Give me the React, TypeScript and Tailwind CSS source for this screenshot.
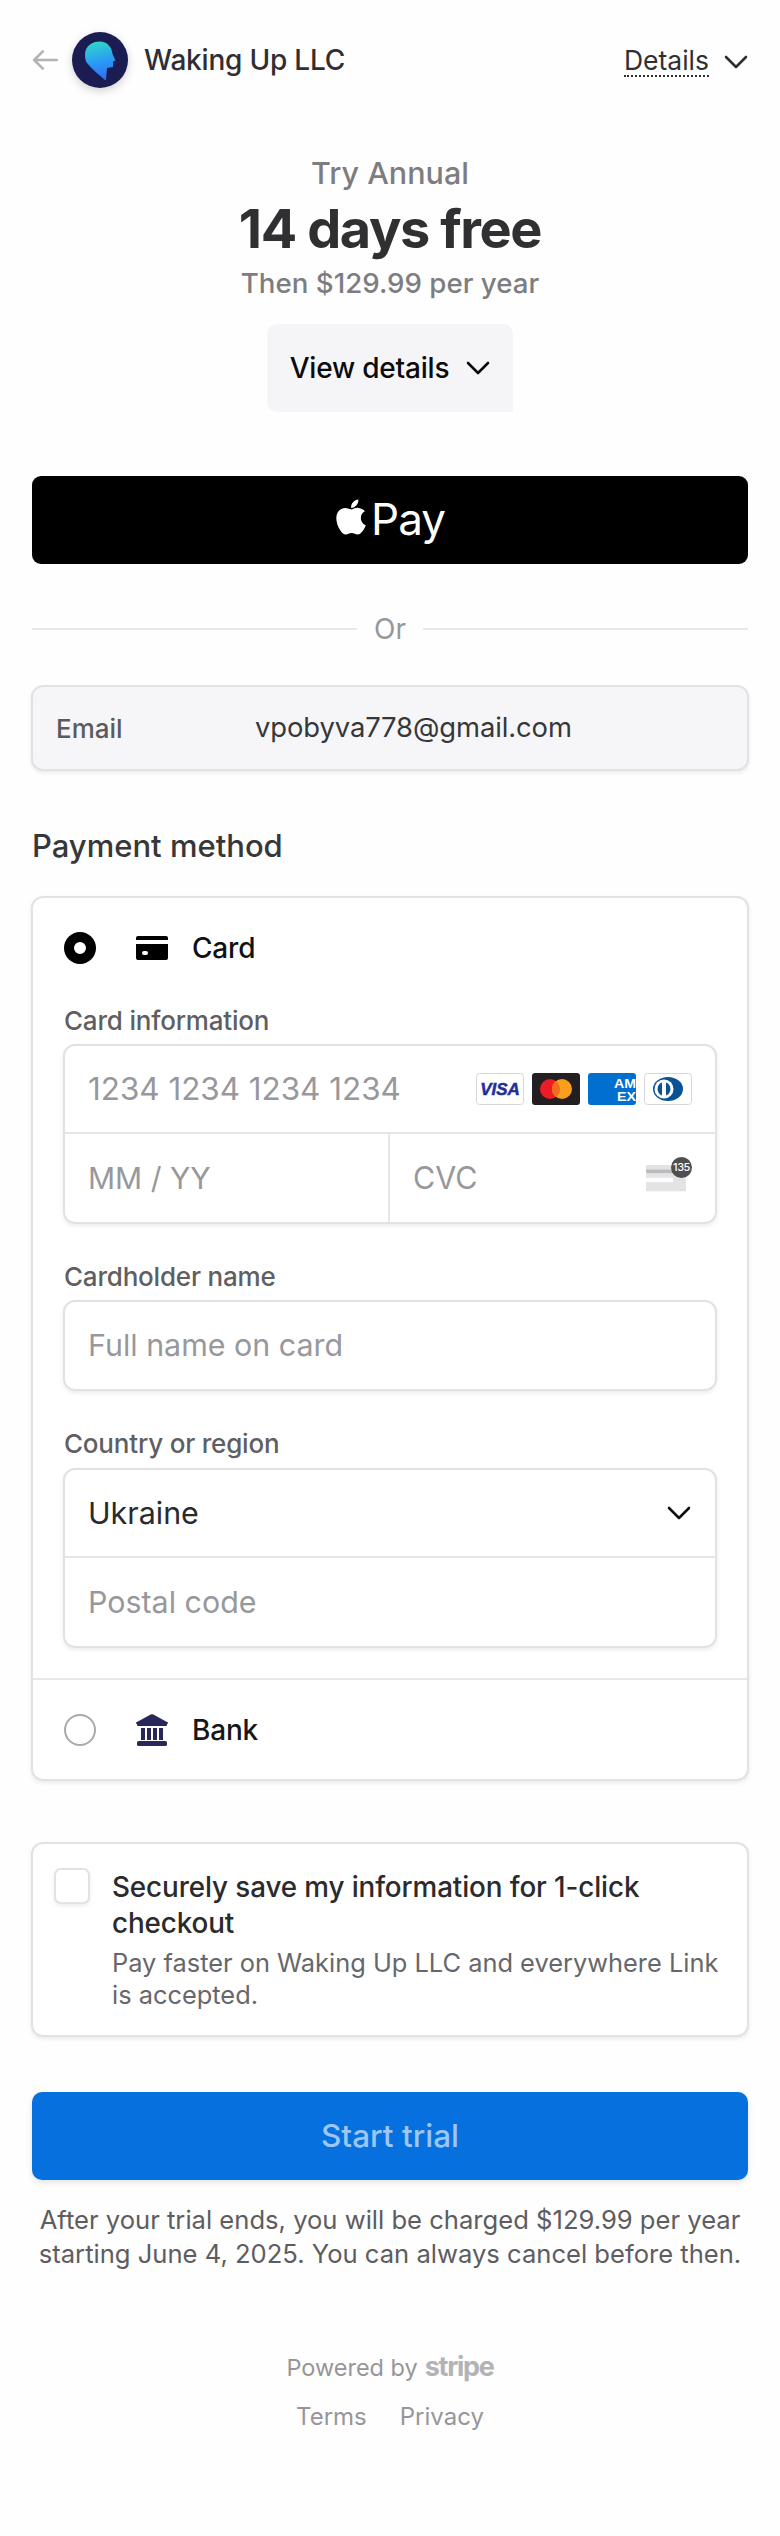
import React from "react";
import { FaApple } from "react-icons/fa6";

const inputShadow = "shadow-[0_2px_4px_rgba(0,0,0,0.08)]";

function Chevron({ className }: { className: string }) {
  return (
    <svg viewBox="0 0 24 16" className={className} fill="none" stroke="currentColor" strokeWidth="2.6" strokeLinecap="round" strokeLinejoin="round">
      <path d="M2 3 L12 13 L22 3" />
    </svg>
  );
}

function Logo() {
  return (
    <svg viewBox="0 0 56 56" className="w-[56px] h-[56px] shrink-0 drop-shadow-[0_3px_4px_rgba(0,0,0,0.18)]">
      <defs>
        <linearGradient id="head" x1="0.4" y1="0" x2="0.6" y2="1">
          <stop offset="0" stopColor="#2fd6c8" />
          <stop offset="0.5" stopColor="#2a9df4" />
          <stop offset="1" stopColor="#2f6cf5" />
        </linearGradient>
      </defs>
      <circle cx="28" cy="28" r="28" fill="#1b1c52" />
      <path d="M13 23 C13 14 20 9.5 28 9.5 C35 9.5 40 15 40.5 22 L43.5 28.5 L41 29.5 L41 35 L35 36 L34 48 L33 48 C27 43 20 37 15 31 C13.5 29 13 26 13 23 Z" fill="url(#head)" />
    </svg>
  );
}

function Visa() {
  return (
    <svg viewBox="0 0 48 32" className="w-[48px] h-[32px]">
      <rect x="0.5" y="0.5" width="47" height="31" rx="3" fill="#fff" stroke="#d5d5da" />
      <text x="24" y="22" textAnchor="middle" fontFamily="'Liberation Sans', sans-serif" fontWeight="700" fontStyle="italic" fontSize="17" fill="#1f2f98" stroke="#1f2f98" strokeWidth="0.5">VISA</text>
    </svg>
  );
}

function Mastercard() {
  return (
    <svg viewBox="0 0 48 32" className="w-[48px] h-[32px]">
      <rect width="48" height="32" rx="3" fill="#231f20" />
      <circle cx="18" cy="16" r="10" fill="#eb1c26" />
      <circle cx="30" cy="16" r="10" fill="#f99f1b" />
      <path d="M24 8 A10 10 0 0 1 24 24 A10 10 0 0 1 24 8 Z" fill="#f26d1f" />
    </svg>
  );
}

function Amex() {
  return (
    <svg viewBox="0 0 48 32" className="w-[48px] h-[32px]">
      <defs>
        <clipPath id="amexclip"><rect width="48" height="32" rx="3" /></clipPath>
      </defs>
      <g clipPath="url(#amexclip)">
        <rect width="48" height="32" fill="#016fd0" />
        <text x="26" y="15" fontFamily="'Liberation Sans', sans-serif" fontWeight="700" fontSize="12" textLength="22" lengthAdjust="spacingAndGlyphs" fill="#fff">AM</text>
        <text x="29" y="28" fontFamily="'Liberation Sans', sans-serif" fontWeight="700" fontSize="12" textLength="19" lengthAdjust="spacingAndGlyphs" fill="#fff">EX</text>
      </g>
    </svg>
  );
}

function Diners() {
  return (
    <svg viewBox="0 0 48 32" className="w-[48px] h-[32px]">
      <rect x="0.5" y="0.5" width="47" height="31" rx="3" fill="#fff" stroke="#d5d5da" />
      <ellipse cx="24" cy="16" rx="15" ry="12" fill="#0a5296" />
      <circle cx="20" cy="16" r="9.5" fill="#fff" />
      <path d="M18 9.5 A7 7 0 0 0 18 22.5 Z M22 9.5 A7 7 0 0 1 22 22.5 Z" fill="#0a5296" />
    </svg>
  );
}

function Cvc() {
  return (
    <div className="relative w-[44px] h-[32px]">
      <svg viewBox="0 0 44 32" className="absolute left-0 top-[3px] w-[44px] h-[29px]">
        <rect width="44" height="29" fill="#e3e3e6" />
        <rect y="5" width="44" height="4" fill="#bcbcbf" />
        <rect y="14" width="30" height="5" fill="#fbfbfc" />
      </svg>
      <div className="absolute right-[-4px] top-[-5px] w-[21px] h-[21px] rounded-full bg-[#4f4f52] text-white text-[11px] font-medium leading-[21px] text-center tracking-[-0.5px]">135</div>
    </div>
  );
}

function Label({ children }: { children: React.ReactNode }) {
  return <div className="h-[28px] leading-[28px] text-[#5f5f63] text-[26px] font-medium tracking-[-0.2px]">{children}</div>;
}

export default function App() {
  return (
    <div className="w-[780px] h-[2536px] bg-[#fefefe] px-[32px] overflow-hidden font-['Inter','Liberation_Sans',sans-serif] text-[#2f2f33]">
      {/* header */}
      <div className="h-[120px] flex items-center">
        <svg viewBox="0 0 24 20" className="w-[26px] h-[22px] text-[#b3b3b6] mr-[14px]" fill="none" stroke="currentColor" strokeWidth="2.4" strokeLinecap="round" strokeLinejoin="round">
          <path d="M23 10 H2 M10 2 L2 10 L10 18" />
        </svg>
        <Logo />
        <div className="ml-[16px] text-[28px] font-medium tracking-[-0.2px]">Waking Up LLC</div>
        <div className="ml-auto text-[26.5px] border-b-2 border-dotted border-[#2f2f33] leading-[29px] mt-[2px]">Details</div>
        <Chevron className="ml-[15px] w-[24px] h-[16px] text-[#2f2f33] mt-[3px]" />
      </div>

      {/* summary */}
      <div className="mt-[33px] text-center">
        <div className="h-[40px] leading-[40px] text-[30.5px] font-medium text-[#7d7d81]">Try Annual</div>
        <div className="mt-[4px] h-[64px] leading-[64px] text-[54px] font-bold tracking-[-1.4px] text-[#303033]">14 days free</div>
        <div className="mt-[6px] h-[32px] leading-[32px] text-[27.7px] font-medium text-[#7d7d81]">Then $129.99 per year</div>
      </div>
      <div className="mt-[25px] mx-auto w-[246px] h-[88px] rounded-[10px] rounded-br-none bg-[#f5f5f7] flex items-center justify-center text-[#0b0b0d] text-[28px] font-medium tracking-[-0.2px]">
        View details
        <Chevron className="ml-[17px] w-[24px] h-[16px]" />
      </div>

      {/* apple pay */}
      <div className="mt-[64px] h-[88px] rounded-[9px] bg-black flex items-center justify-center text-white">
        <FaApple className="w-[36px] h-[40px] mr-[2px] mt-[-6px] ml-[-2px]" />
        <span className="text-[44px] tracking-[-1px] leading-none font-normal mt-[-3px]">Pay</span>
      </div>

      {/* or */}
      <div className="mt-[49px] h-[32px] flex items-center gap-[17px]">
        <div className="flex-1 h-[2px] bg-[#e8e8ea]" />
        <span className="text-[28px] leading-[32px] text-[#97979b]">Or</span>
        <div className="flex-1 h-[2px] bg-[#e8e8ea]" />
      </div>

      {/* email */}
      <div className={`mt-[40px] mx-[-1px] h-[86px] rounded-[12px] border-2 border-[#e2e2e5] bg-[#f6f6f8] flex items-center ${inputShadow}`}>
        <span className="ml-[23px] w-[199px] text-[26px] font-medium text-[#5b5b5f]">Email</span>
        <span className="text-[27.4px] text-[#37373a] tracking-[-0.1px]">vpobyva778@gmail.com</span>
      </div>

      {/* payment */}
      <div className="mt-[57px] h-[36px] leading-[36px] text-[31px] font-medium text-[#37373a]">Payment method</div>

      <div className={`mt-[32px] mx-[-1px] h-[885px] rounded-[12px] border-2 border-[#e2e2e5] bg-white ${inputShadow}`}>
        <div className="h-[100px] flex items-center pl-[31px]">
          <div className="w-[32px] h-[32px] rounded-full border-[10px] border-black bg-white" />
          <svg viewBox="0 0 32 24" className="ml-[40px] w-[32px] h-[24px]">
            <path d="M2 0 H30 A2 2 0 0 1 32 2 V4 H0 V2 A2 2 0 0 1 2 0 Z M0 8 H32 V22 A2 2 0 0 1 30 24 H2 A2 2 0 0 1 0 22 Z" fill="#000" />
            <rect x="6" y="15" width="6" height="4" rx="2" fill="#fff" />
          </svg>
          <span className="ml-[24px] text-[28px] font-medium text-[#111114] tracking-[-0.2px]">Card</span>
        </div>

        <div className="mt-[9px] pl-[30px] pr-[30px]">
          <div className="pl-[1px]"><Label>Card information</Label></div>
          <div className={`mt-[9px] h-[180px] rounded-[12px] border-2 border-[#e2e2e5] ${inputShadow}`}>
            <div className="h-[88px] border-b-2 border-[#e6e6e8] flex items-center pl-[23px] pr-[23px]">
              <span className="text-[31.4px] text-[#98989c] mt-[2px]">1234 1234 1234 1234</span>
              <div className="ml-auto flex gap-[8px]">
                <Visa />
                <Mastercard />
                <Amex />
                <Diners />
              </div>
            </div>
            <div className="h-[88px] flex">
              <div className="w-[325px] border-r-2 border-[#e6e6e8] flex items-center pl-[23px] text-[30px] text-[#98989c]">MM / YY</div>
              <div className="flex-1 flex items-center pl-[23px] pr-[27px] text-[30.5px] text-[#98989c]">
                CVC
                <div className="ml-auto"><Cvc /></div>
              </div>
            </div>
          </div>

          <div className="mt-[39px] pl-[1px]"><Label>Cardholder name</Label></div>
          <div className={`mt-[9px] h-[91px] rounded-[12px] border-2 border-[#e2e2e5] flex items-center pl-[23px] text-[30.4px] text-[#98989c] ${inputShadow}`}>
            Full name on card
          </div>

          <div className="mt-[39px] pl-[1px]"><Label>Country or region</Label></div>
          <div className={`mt-[10px] h-[180px] rounded-[12px] border-2 border-[#e2e2e5] ${inputShadow}`}>
            <div className="h-[88px] border-b-2 border-[#e6e6e8] flex items-center pl-[23px] pr-[24px] text-[30.4px] text-[#2a2a2d]">
              <span className="mt-[2px]">Ukraine</span>
              <Chevron className="ml-auto w-[24px] h-[16px] text-[#111]" />
            </div>
            <div className="h-[88px] flex items-center pl-[23px] text-[30.4px] text-[#98989c]"><span className="mt-[2px]">Postal code</span></div>
          </div>
        </div>

        <div className="mt-[30px] border-t-2 border-[#e8e8ea] h-[101px] flex items-center pl-[31px]">
          <div className="w-[32px] h-[32px] rounded-full border-2 border-[#a9a9ad] bg-white" />
          <svg viewBox="0 0 32 32" className="ml-[40px] w-[32px] h-[32px]">
            <path d="M14.6 0.6 A3 3 0 0 1 17.4 0.6 L31 8 A1 1 0 0 1 31 10 V11 A1 1 0 0 1 30 12 H2 A1 1 0 0 1 1 11 V10 A1 1 0 0 1 1 8 Z" fill="#28285a" />
            <rect x="5" y="14" width="4" height="12" fill="#28285a" />
            <rect x="11" y="14" width="4" height="12" fill="#28285a" />
            <rect x="17" y="14" width="4" height="12" fill="#28285a" />
            <rect x="23" y="14" width="4" height="12" fill="#28285a" />
            <rect x="1" y="27" width="30" height="5" rx="1.5" fill="#28285a" />
          </svg>
          <span className="ml-[24px] text-[28px] font-medium text-[#17171a] tracking-[-0.2px]">Bank</span>
        </div>
      </div>

      {/* save */}
      <div className={`mt-[61px] mx-[-1px] h-[195px] rounded-[12px] border-2 border-[#e2e2e5] bg-white flex ${inputShadow}`}>
        <div className={`ml-[21px] mt-[24px] w-[36px] h-[36px] rounded-[7px] border-2 border-[#e2e2e5] bg-white shrink-0 ${inputShadow}`} />
        <div className="ml-[22px] mt-[25px] pr-[20px]">
          <div className="text-[27.8px] leading-[36px] font-medium text-[#2b2b2e] tracking-[-0.1px]">
            Securely save my information for 1-click checkout
          </div>
          <div className="mt-[6px] text-[25.4px] leading-[32px] text-[#67676b]">
            Pay faster on Waking Up LLC and everywhere Link is accepted.
          </div>
        </div>
      </div>

      {/* submit */}
      <div className="mt-[55px] h-[88px] rounded-[10px] bg-[#0570de] flex items-center justify-center text-[31.5px] font-medium text-[#9cc6f5] shadow-[0_3px_6px_rgba(0,0,0,0.1)]">
        Start trial
      </div>
      <div className="mt-[23px] text-center text-[25.6px] leading-[34px] text-[#5d5d61]">
        After your trial ends, you will be charged $129.99 per year
        <br />
        starting June 4, 2025. You can always cancel before then.
      </div>

      {/* footer */}
      <div className="mt-[81px] flex items-center justify-center text-[23.5px] leading-[32px] text-[#96969a]">
        Powered by
        <span className="ml-[7px] font-bold text-[27px] tracking-[-1.3px] text-[#b3b3b7] mt-[-2px]">stripe</span>
      </div>
      <div className="mt-[17px] flex justify-center gap-[33px] text-[24px] leading-[32px] text-[#96969a]">
        <span>Terms</span>
        <span>Privacy</span>
      </div>
    </div>
  );
}
